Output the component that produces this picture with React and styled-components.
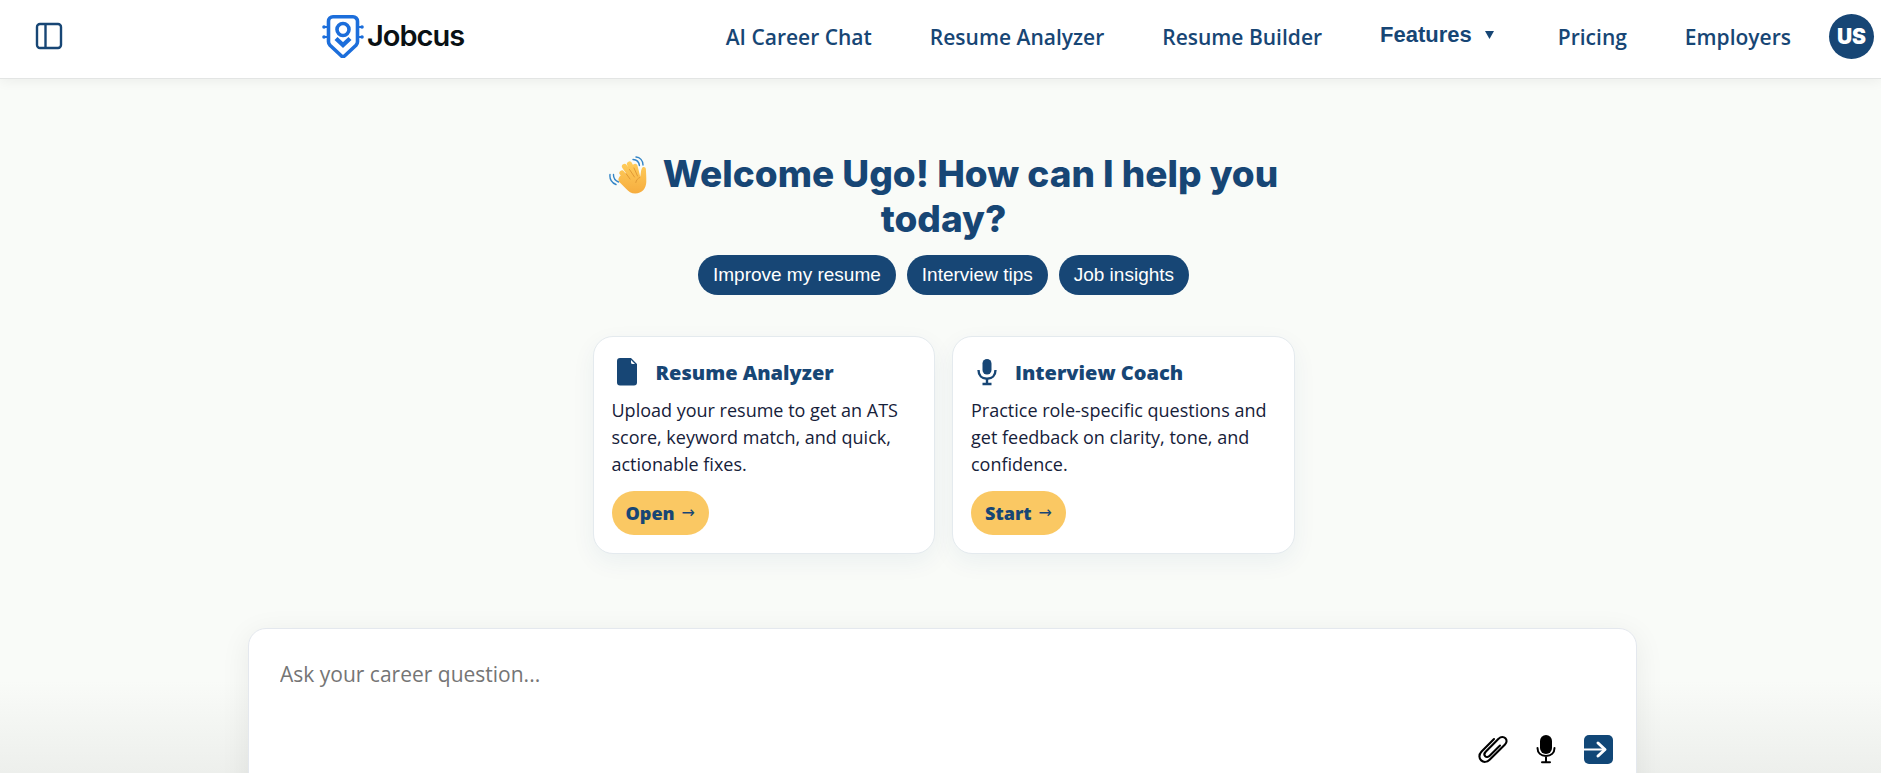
import React from "react";
import styled, { createGlobalStyle } from "styled-components";

const navy = "#174675";
const humanist = `"Open Sans", "Noto Sans", sans-serif`;
const grotesque = `"Liberation Sans", Arial, sans-serif`;

const GlobalStyle = createGlobalStyle`
  *, *::before, *::after { box-sizing: border-box; }
  html, body, #root { height: 100%; }
  body {
    margin: 0;
    overflow: hidden;
    background: #f9fbf8;
    color: #16213a;
    font-family: ${humanist};
  }
  button { font: inherit; border: 0; cursor: pointer; }
`;

const Page = styled.div`
  height: 100vh;
  display: flex;
  flex-direction: column;
  overflow: hidden;
  background: linear-gradient(to top, #edefec 0, #f9fbf8 92px);
`;

const Header = styled.header`
  flex: none;
  height: 79px;
  display: flex;
  align-items: center;
  padding: 0 7px 6px 35px;
  background: #fff;
  border-bottom: 1px solid #e3e5e4;
  box-shadow: 0 2px 12px rgba(0, 0, 0, 0.06);
`;

const IconButton = styled.button`
  display: flex;
  padding: 0;
  background: none;
  color: ${(p) => p.$color || navy};
`;

const Brand = styled.a`
  display: flex;
  align-items: center;
  margin-left: 259px;
  gap: 3px;
  color: #0a1114;
  font: 600 29px/40px "Inter", sans-serif;
  letter-spacing: -1px;
  text-decoration: none;
`;

const Nav = styled.nav`
  margin-left: auto;
  display: flex;
  align-items: center;
  gap: 58px;
`;

const NavLink = styled.a`
  color: ${navy};
  padding-top: 2px;
  font-size: 21px;
  line-height: 30px;
  font-weight: 600;
  text-decoration: none;
  white-space: nowrap;
`;

const NavMenu = styled.button`
  display: flex;
  align-items: center;
  gap: 13px;
  padding: 0 6px 3px 0;
  background: none;
  color: ${navy};
  && { font: 700 22px/26px ${grotesque}; }
`;

const Avatar = styled.button`
  flex: none;
  width: 45px;
  height: 45px;
  margin-left: 38px;
  padding: 0;
  border-radius: 50%;
  background: ${navy};
  color: #fff;
  && { font: 900 21px/45px "Inter", sans-serif; }
`;

const Stage = styled.main`
  flex: none;
  display: flex;
  flex-direction: column;
  align-items: center;
  padding: 72px 0 0 4px;
`;

const Hero = styled.section`
  width: 704px;
  max-width: 100%;
  padding-left: 2px;
  display: flex;
  flex-direction: column;
  align-items: center;
`;

const Title = styled.h1`
  margin: 0;
  text-align: center;
  color: ${navy};
  font: 800 37px/45px "Inter", sans-serif;
`;

const Wave = styled.svg`
  width: 38px;
  height: 40px;
  margin-right: 16px;
  vertical-align: -8px;
`;

const Chips = styled.div`
  display: flex;
  gap: 11px;
  margin-top: 14px;
`;

const Chip = styled.button`
  height: 40px;
  padding: 0 15px;
  border-radius: 20px;
  background: ${navy};
  color: #fff;
  && { font: 400 19px/40px ${grotesque}; }
`;

const Cards = styled.div`
  display: grid;
  grid-template-columns: 1fr 1fr;
  gap: 17px;
  width: 100%;
  margin-top: 41px;
`;

const Card = styled.section`
  padding: 18px;
  border: 1px solid #e4eaee;
  border-radius: 20px;
  background: #fff;
  box-shadow: 0 8px 24px rgba(23, 70, 117, 0.06);
`;

const CardHead = styled.div`
  display: flex;
  align-items: center;
  gap: 14px;
  height: 34px;
`;

const CardTitle = styled.h2`
  margin: 0;
  padding-top: 2px;
  color: ${navy};
  font-size: 20px;
  line-height: 30px;
  font-weight: 800;
`;

const CardText = styled.p`
  margin: 8px 0 13px;
  font-size: 18px;
  line-height: 27px;
`;

const CardAction = styled.button`
  display: flex;
  align-items: center;
  gap: 7px;
  height: 44px;
  padding: 0 14px;
  border-radius: 22px;
  background: #fac863;
  color: ${navy};
  font-size: 18px;
  && { font-weight: 800; }
`;

const Arrow = styled.span`
  font: 400 16px/24px "DejaVu Sans", sans-serif;
`;

const Composer = styled.form`
  width: 74%;
  height: 180px;
  margin-top: 74px;
  padding: 28px 23px 0 31px;
  display: flex;
  flex-direction: column;
  border: 1px solid #e4e8ee;
  border-radius: 18px;
  background: #fff;
  box-shadow: 0 6px 30px rgba(0, 0, 0, 0.07);
`;

const Question = styled.textarea`
  width: 100%;
  height: 77px;
  padding: 0;
  border: 0;
  outline: 0;
  resize: none;
  background: none;
  font: 400 21px/34px ${humanist};
  &::placeholder { color: #757575; opacity: 1; }
`;

const Tools = styled.div`
  display: flex;
  justify-content: flex-end;
  align-items: center;
  gap: 28px;
`;

const PanelIcon = () => (
  <svg width="28" height="28" viewBox="0 0 28 28" fill="none" stroke="currentColor" strokeWidth="2.400">
    <rect x="2" y="2" width="24" height="24" rx="3" />
    <path d="M10.500 2v24" />
  </svg>
);

const LogoMark = () => (
  <svg width="42" height="43" viewBox="0 0 42 43" fill="none" stroke="#1c6edb">
    <path d="M11 1.800h20a4.500 4.500 0 0 1 4.500 4.500v20.500c0 1.500-.5 2.400-1.500 3.500L22.500 41q-1.500 1.400-3 0L8 30.300c-1-1.100-1.500-2-1.500-3.500V6.300A4.500 4.500 0 0 1 11 1.800z" strokeWidth="3.600" />
    <circle cx="21" cy="14.500" r="6" strokeWidth="3.600" />
    <path d="M14 23.500l7 6.500 7-6.500" strokeWidth="4.400" />
    <path d="M1 12h5M1 22h5M36 12h5M36 22h5" strokeWidth="2" />
    <g fill="#1c6edb" stroke="none">
      <circle cx="2" cy="12" r="1.800" /><circle cx="2" cy="22" r="1.800" />
      <circle cx="40" cy="12" r="1.800" /><circle cx="40" cy="22" r="1.800" />
    </g>
  </svg>
);

const CaretIcon = () => (
  <svg width="9" height="8" viewBox="0 0 9 8" fill="currentColor"><path d="M0 0h9L4.500 8z" /></svg>
);

const WavingHand = () => (
  <Wave viewBox="0 0 38 40" fill="none" role="img" aria-label="Waving hand">
    <defs>
      <linearGradient id="skin" gradientUnits="userSpaceOnUse" x1="0" y1="6" x2="0" y2="39">
        <stop offset="0" stopColor="#ffce5c" />
        <stop offset="1" stopColor="#f6ac3e" />
      </linearGradient>
    </defs>
    <g stroke="url(#skin)" strokeWidth="5.200" strokeLinecap="round">
      <path d="M13 18l8 10M15.500 11.500l9 13M20.500 9l7 14M26 11.500l3 12" />
    </g>
    <path d="M11.500 20.500L24 17l7 5c1-2 .4-5.500 1.800-8.500 1.200-2.400 4-1.600 4.100.8.200 4 .5 7.700.4 12.700-.2 6.500-4.300 11.500-11 11.500-4 0-6.800-1.900-9.500-5l-6.200-6.200c-2.400-2.600-.6-5.200.9-6.800z" fill="url(#skin)" />
    <path d="M17 18.500l4 5.500M20.500 14.500l5 7.500M25 13l3.500 8M30.800 22.500c-2 .8-3.600 2.500-4 5" stroke="#e29a35" strokeWidth="1" strokeLinecap="round" />
    <path d="M27 2c4 .2 7 3.500 7 8M24 4.500c3.500.2 6 2.600 6.400 6M1 19.500c-.6 4.500 1.800 8.700 6 10M4.500 19.500c-.2 3.500 1.500 6 5 7.500" stroke="#3485c7" strokeWidth="1.400" strokeLinecap="round" />
  </Wave>
);

const FileIcon = () => (
  <svg width="30" height="30" viewBox="0 0 30 30" fill={navy}>
    <path d="M8 1h11l6 6v18.500a3 3 0 0 1-3 3H8a3 3 0 0 1-3-3V4a3 3 0 0 1 3-3z" />
    <path d="M19 3v2.500a1.500 1.500 0 0 0 1.500 1.500H23z" fill="#fff" />
  </svg>
);

const CoachMicIcon = () => (
  <svg width="30" height="30" viewBox="0 0 30 30" fill="none" stroke={navy} strokeWidth="2.400">
    <rect x="11.500" y="2" width="9" height="15.500" rx="4.500" fill={navy} stroke="none" />
    <path d="M7.500 13c0 5.500 3.500 8.800 8.500 8.800s8.500-3.300 8.500-8.800M16 22v5M11.500 27h9" />
  </svg>
);

const ClipIcon = () => (
  <svg width="30" height="30" viewBox="0 0 30 30" fill="none" stroke="currentColor" strokeWidth="2.100" strokeLinecap="round">
    <path d="M16 5L3.600 17.400c-3.300 3.300-2.400 7.200-.4 9 2.200 2 5.800 2 8.400-.6L27 10.500c2-2 2-4.700.4-6.300s-4.600-1.700-6.600.4L7.700 17.700c-1.700 1.700-1.500 3.500-.5 4.500s3 1 4.500-.5L22 11.500" />
  </svg>
);

const MicIcon = () => (
  <svg width="20" height="30" viewBox="0 0 20 30" fill="none" stroke="currentColor" strokeWidth="2" strokeLinecap="round">
    <rect x="4" y="1" width="12" height="19" rx="6" fill="currentColor" stroke="none" />
    <path d="M1.500 14c0 5 3.500 8 8.500 8s8.500-3 8.500-8M10 22v6M6 28.200h8" />
  </svg>
);

const SendIcon = () => (
  <svg width="29" height="29" viewBox="0 0 29 29" fill="none" stroke="#fff">
    <rect width="29" height="29" rx="5" fill="#114777" stroke="none" />
    <path d="M0 14.500h21" strokeWidth="2" />
    <path d="M14 8l7 6.500-7 6.500" strokeWidth="3" strokeLinecap="round" strokeLinejoin="round" />
  </svg>
);

const chips = ["Improve my resume", "Interview tips", "Job insights"];
const cards = [
  {
    title: "Resume Analyzer",
    icon: <FileIcon />,
    text: "Upload your resume to get an ATS score, keyword match, and quick, actionable fixes.",
    action: "Open",
  },
  {
    title: "Interview Coach",
    icon: <CoachMicIcon />,
    text: "Practice role-specific questions and get feedback on clarity, tone, and confidence.",
    action: "Start",
  },
];

export default function App() {
  return (
    <Page>
      <GlobalStyle />
      <Header>
        <IconButton aria-label="Toggle sidebar"><PanelIcon /></IconButton>
        <Brand href="#home"><LogoMark />Jobcus</Brand>
        <Nav>
          <NavLink href="#chat">AI Career Chat</NavLink>
          <NavLink href="#analyzer">Resume Analyzer</NavLink>
          <NavLink href="#builder">Resume Builder</NavLink>
          <NavMenu>Features <CaretIcon /></NavMenu>
          <NavLink href="#pricing">Pricing</NavLink>
          <NavLink href="#employers">Employers</NavLink>
        </Nav>
        <Avatar>US</Avatar>
      </Header>
      <Stage>
        <Hero>
          <Title><WavingHand />Welcome Ugo! How can I help you today?</Title>
          <Chips>
            {chips.map((label) => <Chip key={label}>{label}</Chip>)}
          </Chips>
          <Cards>
            {cards.map((card) => (
              <Card key={card.title}>
                <CardHead>{card.icon}<CardTitle>{card.title}</CardTitle></CardHead>
                <CardText>{card.text}</CardText>
                <CardAction>{card.action} <Arrow>→</Arrow></CardAction>
              </Card>
            ))}
          </Cards>
        </Hero>
        <Composer>
          <Question aria-label="Career question" placeholder="Ask your career question..." />
          <Tools>
            <IconButton type="button" $color="#000" aria-label="Attach file"><ClipIcon /></IconButton>
            <IconButton type="button" $color="#000" aria-label="Record voice"><MicIcon /></IconButton>
            <IconButton type="submit" aria-label="Send"><SendIcon /></IconButton>
          </Tools>
        </Composer>
      </Stage>
    </Page>
  );
}
